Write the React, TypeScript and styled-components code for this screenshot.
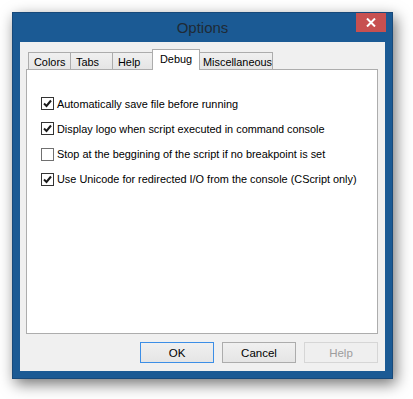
import React from 'react'
import styled, { createGlobalStyle } from 'styled-components'

const GlobalStyle = createGlobalStyle`
  html, body {
    margin: 0;
    padding: 0;
    background: #ffffff;
  }
  body {
    font-family: 'Liberation Sans', Arial, sans-serif;
    font-size: 10.9px;
    color: #000;
  }
`

const Page = styled.div`
  width: 413px;
  height: 399px;
  padding: 12px 0 0 12px;
  box-sizing: border-box;
`

const Window = styled.div`
  width: 381px;
  height: 367px;
  box-sizing: border-box;
  background: #1b5a94;
  border: 1px solid #17497a;
  box-shadow: 3px 5px 14px rgba(0, 0, 0, 0.55);
  display: flex;
  flex-direction: column;
`

const TitleBar = styled.div`
  height: 29px;
  display: grid;
  grid-template-columns: 1fr auto 1fr;
  align-items: start;
`

const Title = styled.div`
  grid-column: 2;
  padding-top: 6px;
  font-size: 15px;
  color: #1f2a36;
`

const CloseButton = styled.div`
  grid-column: 3;
  justify-self: end;
  margin-right: 6px;
  width: 30px;
  height: 19px;
  background: #c75050;
  display: flex;
  align-items: center;
  justify-content: center;
`

const Client = styled.div`
  margin: 0 7px;
  width: 365px;
  height: 329px;
  background: #f0f0f0;
  padding: 7px 7px 0 6px;
  box-sizing: border-box;
  display: flex;
  flex-direction: column;
`

const TabStrip = styled.div`
  display: flex;
  align-items: flex-end;
  height: 20px;
  padding-left: 2px;
`

const Tab = styled.div<{ $width: number; $active?: boolean; $overlap?: number }>`
  width: ${p => p.$width}px;
  height: ${p => (p.$active ? 21 : 17)}px;
  margin-left: ${p => -(p.$overlap ?? 0)}px;
  margin-bottom: ${p => (p.$active ? -1 : 0)}px;
  box-sizing: border-box;
  border: 1px solid #acacac;
  border-bottom: none;
  background: ${p => (p.$active ? '#ffffff' : 'linear-gradient(#f0f0f0, #e5e5e5)')};
  position: relative;
  z-index: ${p => (p.$active ? 2 : 1)};
  display: flex;
  align-items: ${p => (p.$active ? 'flex-start' : 'center')};
  padding: ${p => (p.$active ? '3px 0 0 7px' : '1px 0 0 5px')};
  white-space: nowrap;
  color: #000;
`

const Panel = styled.div`
  height: 265px;
  box-sizing: border-box;
  border: 1px solid #adadad;
  background: #ffffff;
  padding: 27px 0 0 14px;
  display: flex;
  flex-direction: column;
  gap: 12.3px;
`

const CheckRow = styled.label`
  display: flex;
  align-items: center;
  gap: 3px;
  height: 13px;
  white-space: nowrap;
`

const Box = styled.span<{ $checked: boolean }>`
  width: 13px;
  height: 13px;
  box-sizing: border-box;
  border: 1px solid ${p => (p.$checked ? '#333333' : '#707070')};
  background: #ffffff;
  display: flex;
  align-items: center;
  justify-content: center;
  flex-shrink: 0;
`

const ButtonRow = styled.div`
  display: flex;
  justify-content: flex-end;
  gap: 8px;
  margin-top: 8px;
`

const Button = styled.div<{ $primary?: boolean; $disabled?: boolean }>`
  width: 74px;
  height: 21px;
  box-sizing: border-box;
  border: 1px solid ${p => (p.$primary ? '#3c8ee6' : p.$disabled ? '#d6d6d6' : '#acacac')};
  background: ${p => (p.$disabled ? '#efefef' : 'linear-gradient(#f0f0f0, #e5e5e5)')};
  color: ${p => (p.$disabled ? '#9d9d9d' : '#000')};
  font-size: 11.5px;
  display: flex;
  align-items: center;
  justify-content: center;
`

const CheckMark = () => (
  <svg width="9" height="9" viewBox="0 0 9 9">
    <path d="M1 4.5 L3.5 7 L8 1.5" fill="none" stroke="#1a1a1a" strokeWidth="2" />
  </svg>
)

const options = [
  { label: 'Automatically save file before running', checked: true },
  { label: 'Display logo when script executed in command console', checked: true },
  { label: 'Stop at the beggining of the script if no breakpoint is set', checked: false },
  { label: 'Use Unicode for redirected I/O from the console (CScript only)', checked: true },
]

const tabs = [
  { name: 'Colors', width: 43, overlap: 0 },
  { name: 'Tabs', width: 43, overlap: 1 },
  { name: 'Help', width: 43, overlap: 1 },
  { name: 'Debug', width: 48, overlap: 3, active: true },
  { name: 'Miscellaneous', width: 76, overlap: 3 },
]

export default function App() {
  return (
    <Page>
      <GlobalStyle />
      <Window>
        <TitleBar>
          <Title>Options</Title>
          <CloseButton>
            <svg width="10" height="9" viewBox="0 0 10 9">
              <path d="M1 0.5 L9 8.5 M9 0.5 L1 8.5" stroke="#fff" strokeWidth="2" />
            </svg>
          </CloseButton>
        </TitleBar>
        <Client>
          <TabStrip>
            {tabs.map(t => (
              <Tab key={t.name} $width={t.width} $overlap={t.overlap} $active={t.active}>
                {t.name}
              </Tab>
            ))}
          </TabStrip>
          <Panel>
            {options.map(o => (
              <CheckRow key={o.label}>
                <Box $checked={o.checked}>{o.checked && <CheckMark />}</Box>
                {o.label}
              </CheckRow>
            ))}
          </Panel>
          <ButtonRow>
            <Button $primary>OK</Button>
            <Button>Cancel</Button>
            <Button $disabled>Help</Button>
          </ButtonRow>
        </Client>
      </Window>
    </Page>
  )
}
